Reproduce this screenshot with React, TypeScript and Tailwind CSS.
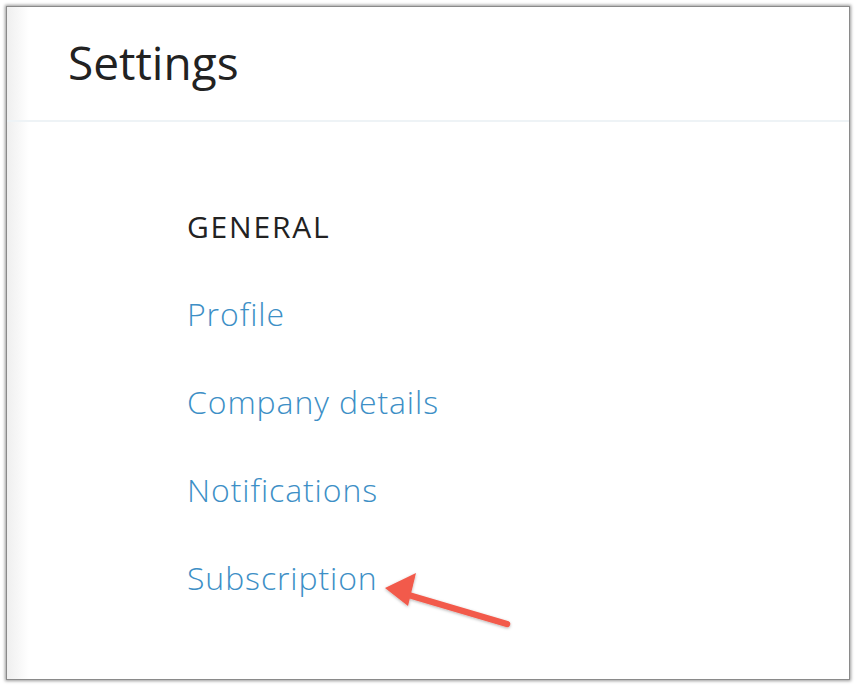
export default function App() {
  const links = ["Profile", "Company details", "Notifications", "Subscription"];
  return (
    <div className="w-[856px] h-[686px] bg-white overflow-hidden" style={{ fontFamily: '"Open Sans", "Noto Sans", sans-serif' }}>
      <div className="ml-[6px] mt-[6px] w-[844px] h-[674px] border border-[#8a8a8a] shadow-[0_0_3px_1px_rgba(0,0,0,0.4)] bg-white relative overflow-hidden">
        <div className="absolute left-0 top-0 bottom-0 w-[22px] bg-gradient-to-r from-[#efefef] to-white" />
        <div className="relative h-[115px] border-b-2 border-[#eef3f6] pl-[61px] pt-[27px]">
          <h1 className="text-[46px] leading-[56px] text-[#222] font-normal">Settings</h1>
        </div>
        <div className="relative pl-[180px] pt-[85px]">
          <div className="text-[30px] leading-[40px] text-[#222] tracking-[1.8px]">GENERAL</div>
          <ul className="mt-[45px] flex flex-col gap-[44px]">
            {links.map((l) => (
              <li key={l} className="text-[32px] leading-[44px] text-[#3d8fc6] font-light tracking-[0.9px]">
                {l}
              </li>
            ))}
          </ul>
        </div>
        <svg className="absolute left-0 top-0" width="844" height="674" viewBox="6 6 844 674">
          <defs>
            <filter id="sh" x="-20%" y="-20%" width="140%" height="140%">
              <feDropShadow dx="0" dy="1" stdDeviation="1.5" floodColor="#000" floodOpacity="0.3" />
            </filter>
          </defs>
          <g filter="url(#sh)">
            <line x1="506" y1="623" x2="394" y2="590" stroke="#f25a4b" strokeWidth="6.5" strokeLinecap="round" />
            <polygon points="384,587 415,572 407,605" fill="#f25a4b" />
          </g>
        </svg>
      </div>
    </div>
  );
}
